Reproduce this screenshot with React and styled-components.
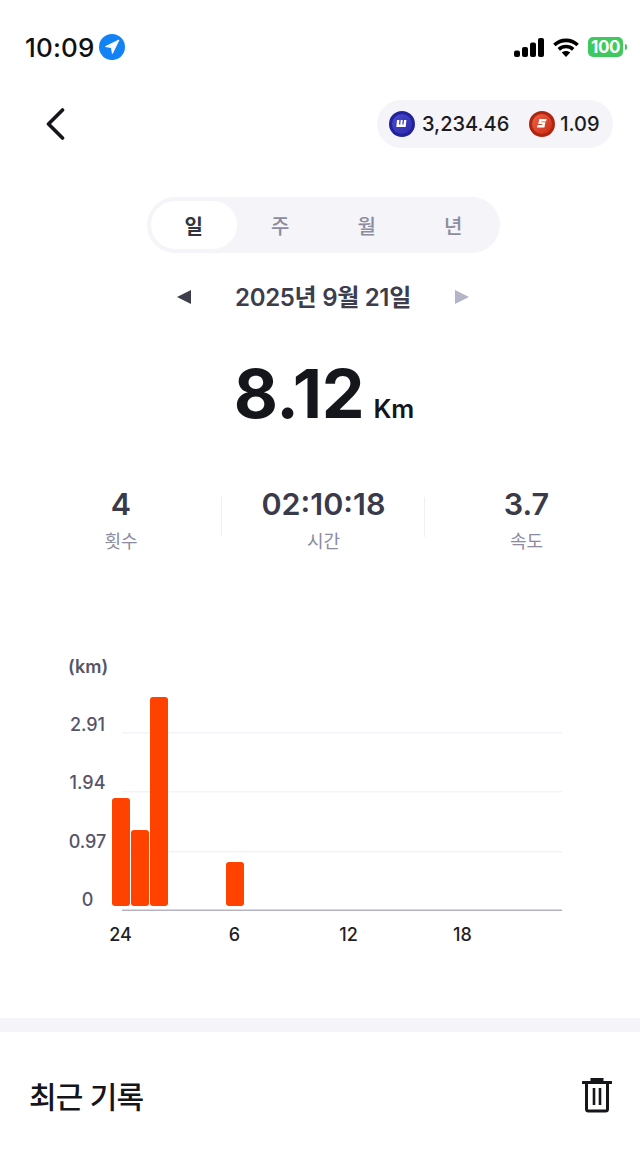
import React from 'react'
import styled, { createGlobalStyle } from 'styled-components'

const Global = createGlobalStyle`
  html, body { margin: 0; padding: 0; background: #fff; }
  body { font-family: Inter, "Noto Sans CJK KR", sans-serif; }
`

const Page = styled.div`
  width: 640px;
  height: 1155px;
  overflow: hidden;
  background: #fff;
  display: flex;
  flex-direction: column;
  & > * { flex: none; }
`

const StatusBar = styled.div`
  height: 100px;
  box-sizing: border-box;
  padding: 32px 17px 0 25px;
  display: flex;
  justify-content: space-between;
  align-items: flex-start;
`
const TimeWrap = styled.div`
  display: flex;
  align-items: center;
  gap: 4px;
  height: 30px;
`
const Time = styled.span`
  font-size: 26px;
  font-weight: 500;
  color: #111;
  letter-spacing: 0.2px;
`
const StatusIcons = styled.div`
  display: flex;
  align-items: center;
  gap: 9px;
  height: 30px;
`
const Battery = styled.div`
  position: relative;
  width: 35px;
  height: 20px;
  border-radius: 5px;
  background: #3ec95f;
  color: #fff;
  font-size: 17px;
  font-weight: 700;
  line-height: 20px;
  text-align: center;
  letter-spacing: -0.4px;
  &::after {
    content: '';
    position: absolute;
    right: -4px;
    top: 7px;
    width: 2px;
    height: 6px;
    border-radius: 0 2px 2px 0;
    background: #3ec95f;
  }
`

const Header = styled.div`
  height: 48px;
  padding: 0 27px 0 46px;
  display: flex;
  justify-content: space-between;
  align-items: center;
`
const BalancePill = styled.div`
  height: 48px;
  width: 236px;
  box-sizing: border-box;
  padding: 0 12px;
  border-radius: 24px;
  background: #f4f4f9;
  display: flex;
  align-items: center;
  font-size: 20px;
  font-weight: 500;
  color: #1b1b22;
`
const Amount = styled.span`
  margin-left: ${p => p.$gap}px;
  margin-right: ${p => p.$after || 0}px;
`

const Tabs = styled.div`
  align-self: center;
  margin-top: 49px;
  margin-left: 7px;
  width: 353px;
  height: 56px;
  box-sizing: border-box;
  padding: 4px;
  border-radius: 28px;
  background: #f4f4f9;
  display: flex;
`
const Tab = styled.div`
  width: 86px;
  margin-right: ${p => (p.$last ? 0 : 1)}px;
  border-radius: 24px;
  display: flex;
  align-items: center;
  justify-content: center;
  font-size: 20px;
  font-weight: ${p => (p.$active ? 600 : 500)};
  color: ${p => (p.$active ? '#34343f' : '#8c8c9f')};
  background: ${p => (p.$active ? '#fff' : 'transparent')};
`

const DateRow = styled.div`
  margin-top: 26px;
  height: 36px;
  padding-left: 176px;
  display: flex;
  align-items: center;
`
const DateText = styled.div`
  width: 264px;
  margin-top: -4px;
  text-align: center;
  font-size: 24px;
  font-weight: 600;
  color: #3d3d4c;
  letter-spacing: -0.3px;
`

const Distance = styled.div`
  margin-top: 40px;
  height: 76px;
  display: flex;
  justify-content: center;
  align-items: baseline;
  color: #15151c;
  padding-left: 8px;
`
const DistanceValue = styled.span`
  font-size: 68px;
  line-height: 76px;
  font-weight: 700;
  letter-spacing: -0.2px;
`
const DistanceUnit = styled.span`
  margin-left: 9px;
  font-size: 25.5px;
  font-weight: 600;
`

const Stats = styled.div`
  margin-top: 55px;
  padding: 0 20px;
  height: 70px;
  display: grid;
  grid-template-columns: 202px 203px 203px;
`
const Stat = styled.div`
  display: flex;
  flex-direction: column;
  align-items: center;
  position: relative;
  ${p => p.$divider && `
    &::after {
      content: '';
      position: absolute;
      right: 0;
      top: 11px;
      height: 40px;
      width: 1px;
      background: #f0f0f4;
    }
  `}
`
const StatValue = styled.div`
  font-size: 30.5px;
  line-height: 36px;
  font-weight: 600;
  color: #3a3a4a;
`
const StatLabel = styled.div`
  margin-top: 6px;
  font-size: 18px;
  line-height: 28px;
  color: #8c8c9f;
`

const Chart = styled.svg`
  display: block;
  margin-top: 89px;
`
const AxisText = styled.text`
  font-family: Inter, sans-serif;
  font-size: 18px;
  font-weight: ${p => p.$weight || 500};
  fill: ${p => p.$color || '#55556a'};
`

const Band = styled.div`
  margin-top: 53px;
  height: 14px;
  background: #f4f4f9;
`
const Recent = styled.div`
  height: 126px;
  padding: 0 28px 0 29px;
  display: flex;
  justify-content: space-between;
  align-items: center;
`
const RecentTitle = styled.div`
  font-size: 30px;
  font-weight: 500;
  color: #15151c;
  letter-spacing: -0.8px;
`

const gridLines = [732, 791, 851]
const yLabels = [['2.91', 731], ['1.94', 789], ['0.97', 848], ['0', 906]]
const xLabels = [['24', 120.5], ['6', 234.5], ['12', 348.5], ['18', 462.5]]
const bars = [[112, 798], [131, 830], [150, 697], [226, 862]]

function CoinIcon({ id, light, mid, ring, letter }) {
  return (
    <svg width="26" height="26" viewBox="0 0 26 26">
      <defs>
        <linearGradient id={id} x1="0" y1="0" x2="1" y2="1">
          <stop offset="0" stopColor={light} />
          <stop offset="1" stopColor={mid} />
        </linearGradient>
      </defs>
      <circle cx="13" cy="13" r="13" fill={ring} />
      <circle cx="13" cy="13" r="10" fill={`url(#${id})`} />
      {letter === 'w' ? (
        <path d="M8 9h2.4l-.4 4.6h1.3l.4-4.6h2l-.4 4.6h1.3l.4-4.6h2.4l-.7 7H7.3z" fill="#fff" />
      ) : (
        <path d="M10.4 8h7.2l-.6 2.4h-4.6l-.2.9h4.2l-1 5.1H8l.6-2.4h4.6l.2-.9H9.2z" fill="#fff" />
      )}
    </svg>
  )
}

export default function App() {
  return (
    <Page>
      <Global />
      <StatusBar>
        <TimeWrap>
          <Time>10:09</Time>
          <svg width="26" height="26" viewBox="0 0 26 26">
            <circle cx="13" cy="13" r="13" fill="#1282f5" />
            <path d="M20 6 6.5 12.6l6 .9.9 6z" fill="#fff" stroke="#fff" strokeWidth="1" strokeLinejoin="round" />
          </svg>
        </TimeWrap>
        <StatusIcons>
          <svg width="30" height="19" viewBox="0 0 30 19">
            <rect x="0" y="12.5" width="6" height="6.5" rx="2" fill="#000" />
            <rect x="8" y="9" width="6" height="10" rx="2" fill="#000" />
            <rect x="16" y="4.5" width="6" height="14.5" rx="2" fill="#000" />
            <rect x="24" y="0" width="6" height="19" rx="2" fill="#000" />
          </svg>
          <svg width="26" height="19" viewBox="0 0 26 19" fill="none" stroke="#000" strokeWidth="3.6">
            <path d="M1.4 7C8 .8 18 .8 24.6 7" />
            <path d="M5.8 11.4c4.2-3.8 10.2-3.8 14.4 0" />
            <path d="M13 19 8.8 14.6c2.4-2 6-2 8.4 0z" fill="#000" stroke="none" />
          </svg>
          <Battery>100</Battery>
        </StatusIcons>
      </StatusBar>

      <Header>
        <svg width="20" height="32" viewBox="0 0 20 32" fill="none" stroke="#15151c" strokeWidth="3.6" strokeLinecap="round" strokeLinejoin="round">
          <path d="M16.5 2 2.5 16l14 14" />
        </svg>
        <BalancePill>
          <CoinIcon id="coinW" light="#4a4ad0" mid="#2c2ca8" ring="#22229a" letter="w" />
          <Amount $gap={7} $after={20}>3,234.46</Amount>
          <CoinIcon id="coinS" light="#ee6248" mid="#c92c14" ring="#b02410" letter="s" />
          <Amount $gap={5}>1.09</Amount>
        </BalancePill>
      </Header>

      <Tabs>
        <Tab $active>일</Tab>
        <Tab>주</Tab>
        <Tab>월</Tab>
        <Tab $last>년</Tab>
      </Tabs>

      <DateRow>
        <svg width="15" height="16" viewBox="0 0 15 16"><path d="M15 1v14L1 8z" fill="#3d3d4c" /></svg>
        <DateText>2025년 9월 21일</DateText>
        <svg width="15" height="16" viewBox="0 0 15 16"><path d="M0 1v14l14-7z" fill="#b4b4c8" /></svg>
      </DateRow>

      <Distance>
        <DistanceValue>8.12</DistanceValue>
        <DistanceUnit>Km</DistanceUnit>
      </Distance>

      <Stats>
        <Stat $divider>
          <StatValue>4</StatValue>
          <StatLabel>횟수</StatLabel>
        </Stat>
        <Stat $divider>
          <StatValue>02:10:18</StatValue>
          <StatLabel>시간</StatLabel>
        </Stat>
        <Stat>
          <StatValue>3.7</StatValue>
          <StatLabel>속도</StatLabel>
        </Stat>
      </Stats>

      <Chart width="640" height="320" viewBox="0 645 640 320">
        <AxisText x="68" y="673" $weight={600}>(km)</AxisText>
        {gridLines.map(y => (
          <rect key={y} x="122" y={y} width="440" height="1.5" fill="#f3f4f7" />
        ))}
        <rect x="122" y="909.5" width="440" height="1.5" fill="#b3b3c6" />
        {yLabels.map(([t, y]) => (
          <AxisText key={t} x="87.5" y={y} textAnchor="middle">{t}</AxisText>
        ))}
        {bars.map(([x, y]) => (
          <rect key={x} x={x} y={y} width="18" height={906 - y} rx="3" fill="#ff4200" />
        ))}
        {xLabels.map(([t, x]) => (
          <AxisText key={t} x={x} y="941" textAnchor="middle" $color="#1f1f28">{t}</AxisText>
        ))}
      </Chart>

      <Band />
      <Recent>
        <RecentTitle>최근 기록</RecentTitle>
        <svg width="30" height="36" viewBox="0 0 30 36" fill="none" stroke="#15151c" strokeWidth="3">
          <path d="M1 5.5h28" strokeLinecap="round" />
          <path d="M10 4V2.5h10V4" />
          <path d="M4.5 6v26a2 2 0 0 0 2 2h17a2 2 0 0 0 2-2V6" />
          <path d="M12 11v17M18 11v17" strokeWidth="2.6" />
        </svg>
      </Recent>
    </Page>
  )
}
